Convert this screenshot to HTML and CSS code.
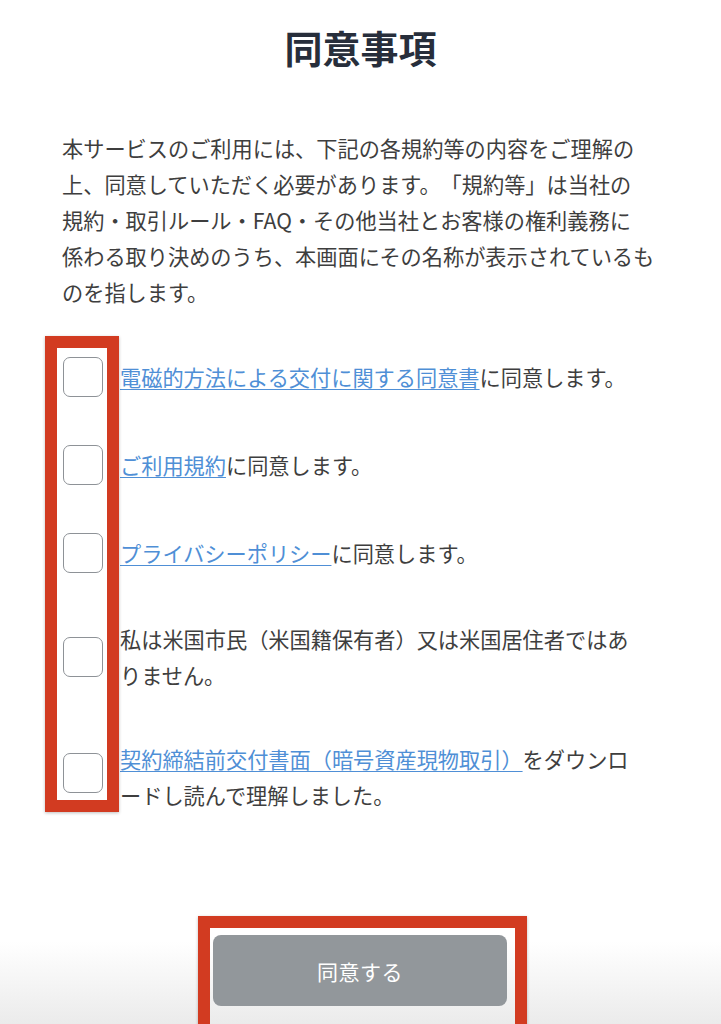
FILE: index.html
```html
<!DOCTYPE html>
<html lang="ja">
<head>
<meta charset="utf-8">
<title>同意事項</title>
<link rel="stylesheet" href="styles.css">
</head>
<body>
<div class="page">
  <main class="content">
    <h1 class="title">同意事項</h1>
    <p class="intro">本サービスのご利用には、下記の各規約等の内容をご理解の<br>上、同意していただく必要があります。「規約等」は当社の<br>規約・取引ルール・FAQ・その他当社とお客様の権利義務に<br>係わる取り決めのうち、本画面にその名称が表示されているも<br>のを指します。</p>
    <div class="agree-list">
      <label class="agree-item">
        <input type="checkbox" class="check">
        <span class="agree-text"><a href="#" class="link">電磁的方法による交付に関する同意書</a>に同意します。</span>
      </label>
      <label class="agree-item">
        <input type="checkbox" class="check">
        <span class="agree-text"><a href="#" class="link">ご利用規約</a>に同意します。</span>
      </label>
      <label class="agree-item">
        <input type="checkbox" class="check">
        <span class="agree-text"><a href="#" class="link">プライバシーポリシー</a>に同意します。</span>
      </label>
      <label class="agree-item">
        <input type="checkbox" class="check">
        <span class="agree-text">私は米国市民（米国籍保有者）又は米国居住者ではあ<br>りません。</span>
      </label>
      <label class="agree-item agree-item-top">
        <input type="checkbox" class="check">
        <span class="agree-text"><a href="#" class="link">契約締結前交付書面（暗号資産現物取引）</a>をダウンロ<br>ードし読んで理解しました。</span>
      </label>
      <div class="mark mark-checks"></div>
    </div>
  </main>
  <footer class="footer">
    <div class="btn-wrap">
      <button class="agree-btn" type="button">同意する</button>
      <div class="mark mark-btn"></div>
    </div>
  </footer>
</div>
</body>
</html>
```

FILE: styles.css
```css
* {
  box-sizing: border-box;
}

html, body {
  margin: 0;
  padding: 0;
  background: #ffffff;
}

body {
  font-family: "Noto Sans CJK JP", "Noto Sans", sans-serif;
  color: #3a3a3a;
  overflow: hidden;
}

.page {
  height: 1024px;
  display: flex;
  flex-direction: column;
}

.content {
  padding: 23px 40px 0 62px;
}

.title {
  margin: 0 -40px 0 -62px;
  text-align: center;
  font-size: 38px;
  line-height: 48px;
  font-weight: 700;
  color: #272e3b;
}

.intro {
  margin: 59px 0 0 0;
  font-size: 21.2px;
  line-height: 36px;
  white-space: nowrap;
  color: #3e3e3e;
  text-spacing-trim: space-all;
}

.agree-list {
  position: relative;
  margin-top: 47px;
  display: flex;
  flex-direction: column;
  gap: 48px;
}

.agree-item {
  display: flex;
  align-items: center;
  gap: 17px;
  margin-left: 1px;
}

.agree-item-top {
  align-items: flex-start;
}

.agree-item-top .check {
  margin-top: 12px;
}

.check {
  appearance: none;
  -webkit-appearance: none;
  margin: 0;
  flex: 0 0 auto;
  width: 40px;
  height: 40px;
  border: 1.5px solid #8e9297;
  border-radius: 7px;
  background: #ffffff;
}

.agree-text {
  font-size: 21.2px;
  line-height: 36px;
  white-space: nowrap;
  color: #3e3e3e;
  text-spacing-trim: space-all;
}

.link {
  color: #4f8fd6;
  text-decoration: underline;
  text-decoration-thickness: 1px;
  text-underline-offset: 3px;
}

.mark {
  position: absolute;
  border: 12px solid #d23b21;
  box-shadow: 0 1px 3px rgba(0, 0, 0, 0.25);
  pointer-events: none;
}

.mark-checks {
  left: -17px;
  top: -21px;
  width: 74px;
  bottom: 1px;
}

.footer {
  margin-top: auto;
  height: 150px;
  display: flex;
  justify-content: center;
  align-items: flex-end;
  padding-bottom: 18px;
  background: linear-gradient(to bottom, #ffffff 0%, #ffffff 45%, #ebebeb 100%);
}

.btn-wrap {
  position: relative;
  margin-left: -1px;
}

.agree-btn {
  display: block;
  width: 294px;
  height: 71px;
  border: none;
  border-radius: 8px;
  background: #92979b;
  color: #ffffff;
  font-family: "Noto Sans CJK JP", "Noto Sans", sans-serif;
  font-size: 21px;
  letter-spacing: 0.5px;
}

.mark-btn {
  left: -15px;
  top: -19px;
  right: -20px;
  bottom: -40px;
}
```
